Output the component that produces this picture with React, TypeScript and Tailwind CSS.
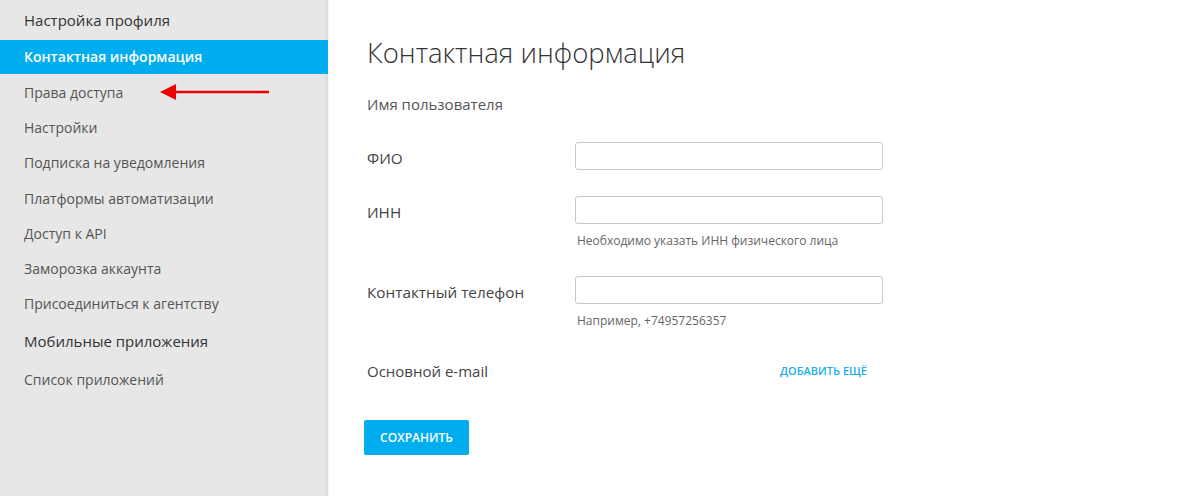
import React from 'react';

const font = { fontFamily: '"Open Sans", "Noto Sans", sans-serif' };

// Red pointer arrow next to a menu item
const Arrow = () => (
  <svg width="112" height="20" viewBox="0 0 112 20" className="ml-[37px]">
    <line x1="14" y1="10" x2="109" y2="10" stroke="#f20000" strokeWidth="2.5" />
    <polygon points="0,10 16,2 16,18" fill="#f20000" />
  </svg>
);

const menu = [
  { name: 'Права доступа', arrow: true },
  { name: 'Настройки' },
  { name: 'Подписка на уведомления' },
  { name: 'Платформы автоматизации' },
  { name: 'Доступ к API' },
  { name: 'Заморозка аккаунта' },
  { name: 'Присоединиться к агентству' },
];

const Field = ({ label, hint }: { label: string; hint?: string }) => (
  <div className="flex">
    <div className="w-[208px] pt-[5px] text-[15.3px] text-[#444]">{label}</div>
    <div>
      <input
        type="text"
        className="h-[28px] w-[308px] rounded-[3px] border border-[#c8c8c8] bg-white px-2 outline-none"
      />
      {hint && <div className="mt-[8px] pl-[2px] text-[12px] text-[#666]">{hint}</div>}
    </div>
  </div>
);

export default function App() {
  return (
    <div className="flex h-[496px] w-[1200px] bg-white" style={font}>
      {/* Sidebar */}
      <aside className="relative w-[328px] shrink-0 bg-[#e7e7e7] shadow-[inset_-5px_0_4px_-3px_rgba(0,0,0,0.06)]">
        <div className="px-6 pt-[9px] pb-[8px] text-[15px] font-medium text-[#333]">Настройка профиля</div>
        <div className="flex h-[34px] items-center bg-[#00adef] px-6 text-[14px] font-semibold text-white">
          Контактная информация
        </div>
        <ul className="pt-[1px]">
          {menu.map((item) => (
            <li key={item.name} className="flex h-[35.3px] items-center px-6 text-[14px] text-[#555]">
              {item.name}
              {item.arrow && <Arrow />}
            </li>
          ))}
        </ul>
        <div className="flex h-[40px] items-center px-6 text-[15px] font-medium text-[#333]">Мобильные приложения</div>
        <div className="flex h-[36px] items-center px-6 text-[14px] text-[#555]">Список приложений</div>
      </aside>

      {/* Content */}
      <main className="flex-1 rounded-tl-[3px] border-l border-[#f4f4f4] pl-[38px] pt-[35px] text-[#444]">
        <h1 className="text-[27.5px] font-light leading-[36px] text-[#333]">Контактная информация</h1>
        <div className="mt-[22px] text-[15px] text-[#555]">Имя пользователя</div>

        <div className="mt-[26px] flex flex-col gap-[26px]">
          <Field label="ФИО" />
          <Field label="ИНН" hint="Необходимо указать ИНН физического лица" />
          <Field label="Контактный телефон" hint="Например, +74957256357" />
        </div>

        <div className="mt-[30px] flex w-[500px] items-center justify-between">
          <span className="text-[15px] text-[#444]">Основной e-mail</span>
          <a href="#" className="text-[11px] font-semibold text-[#1aaeea]">
            ДОБАВИТЬ ЕЩЁ
          </a>
        </div>

        <button className="mt-[38px] ml-[-3px] h-[35px] w-[105px] rounded-[2px] bg-[#00adef] text-[12px] font-semibold text-white">
          СОХРАНИТЬ
        </button>
      </main>
    </div>
  );
}
